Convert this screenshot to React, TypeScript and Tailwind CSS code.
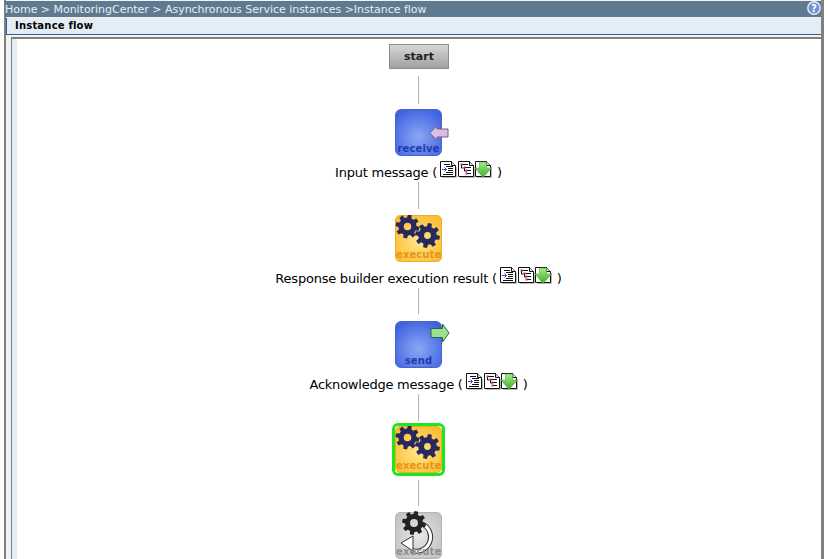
import { Fragment } from "react";

const FONT = "font-['DejaVu_Sans','Liberation_Sans',sans-serif]";

function gearPath(cx: number, cy: number, outer: number, inner: number, hole: number, teeth = 8) {
  const pts: string[] = [];
  const step = (Math.PI * 2) / teeth;
  for (let i = 0; i < teeth; i++) {
    const a = i * step - Math.PI / 2 + 0.2;
    const seq: [number, number][] = [
      [inner, a - step * 0.32],
      [outer, a - step * 0.2],
      [outer, a + step * 0.2],
      [inner, a + step * 0.32],
    ];
    for (const [r, t] of seq) {
      pts.push(`${(cx + r * Math.cos(t)).toFixed(2)} ${(cy + r * Math.sin(t)).toFixed(2)}`);
    }
  }
  const h = `M${cx - hole} ${cy}a${hole} ${hole} 0 1 0 ${hole * 2} 0a${hole} ${hole} 0 1 0 ${-hole * 2} 0z`;
  return `M${pts.join("L")}z${h}`;
}

function Connector({ h, mt = "mt-0" }: { h: string; mt?: string }) {
  return <div className={`w-px bg-[#b4b4b4] ${h} ${mt}`} />;
}

function Gears() {
  return (
    <svg width="47" height="47" viewBox="0 0 47 47" className="absolute -left-px -top-px">
      <path d={gearPath(12.5, 11.5, 12, 9, 3.8)} fill="#26285f" fillRule="evenodd" />
      <path d={gearPath(32.5, 20.5, 12.5, 9.2, 3.4)} fill="#26285f" fillRule="evenodd" />
    </svg>
  );
}

function ReceiveNode() {
  return (
    <div className="relative w-[47px] h-[47px] rounded-[6px] border border-[#4a64c8] bg-[radial-gradient(circle_at_50%_60%,#8ba8f5,#3f63e0_85%)]">
      <svg width="20" height="16" viewBox="0 0 20 16" className="absolute left-[33px] top-[15px]">
        <path d="M.7 8 8 .8v3.2h11v8H8v3.200z" fill="#d9bfe0" stroke="#7d5a8c" strokeWidth="1" />
      </svg>
      <span className={`absolute inset-x-0 bottom-0 text-center text-[10px] tracking-[0.1px] leading-[13px] font-bold text-[#1f3bb0] ${FONT}`}>receive</span>
    </div>
  );
}

function SendNode() {
  return (
    <div className="relative w-[47px] h-[47px] rounded-[6px] border border-[#4a64c8] bg-[radial-gradient(circle_at_50%_60%,#8ba8f5,#3f63e0_85%)]">
      <svg width="20" height="20" viewBox="0 0 20 20" className="absolute left-[34px] top-[1px]">
        <path d="M1 5.500h11.500V1l6.500 9-6.500 9v-4.500H1z" fill="#9ee08f" stroke="#1f6b45" strokeWidth="1" />
      </svg>
      <span className={`absolute inset-x-0 bottom-0 text-center text-[10px] tracking-[0.1px] leading-[13px] font-bold text-[#1f3bb0] ${FONT}`}>send</span>
    </div>
  );
}

function ExecuteNode() {
  return (
    <div className="relative w-[47px] h-[47px] rounded-[5px] border border-[#e6b030] bg-[radial-gradient(circle_at_50%_55%,#ffe88c,#fcbc30_85%)]">
      <Gears />
      <span className={`absolute inset-x-0 bottom-0 text-center text-[10px] tracking-[0.1px] leading-[13px] font-bold text-[#e8921a] ${FONT}`}>execute</span>
    </div>
  );
}

function LoopNode() {
  return (
    <div className="relative w-[47px] h-[47px] rounded-[5px] border border-[#b4b4b4] bg-[radial-gradient(circle_at_50%_50%,#e8e8e8,#c4c4c4_85%)]">
      <svg width="47" height="47" viewBox="0 0 47 47" className="absolute -left-px -top-px overflow-visible">
        <path d="M27 12A14 14 0 0 1 16 38" fill="none" stroke="#333" strokeWidth="5" />
        <path d="M27 12A14 14 0 0 1 16 38" fill="none" stroke="#fff" strokeWidth="3" />
        <path d="M6 31 18 24v15z" fill="#fff" stroke="#333" strokeWidth="1" />
        <path d={gearPath(19, 11, 12, 9, 4)} fill="#222" fillRule="evenodd" />
      </svg>
      <span className={`absolute inset-x-0 bottom-0 text-center text-[10px] tracking-[0.1px] leading-[13px] font-bold text-[#8f8f8f] ${FONT}`}>execute</span>
    </div>
  );
}

function DocIcon({ kind }: { kind: "lines" | "tree" | "down" }) {
  return (
    <svg width="17" height="17" viewBox="0 0 17 17" className="shrink-0">
      <defs>
        <linearGradient id="downFill" x1="0" y1="0" x2="0" y2="1">
          <stop offset="0" stopColor="#a2ec8a" />
          <stop offset="1" stopColor="#3fae24" />
        </linearGradient>
      </defs>
      <path d="M2 16.500h14.500V6" fill="none" stroke="#bbb" strokeWidth="1" />
      <path d="M.5.5h11l4 4v11H.5z" fill="#fff" stroke="#111" strokeWidth="1" />
      <path d="M11.500.5v4h4" fill="#ddd" stroke="#111" strokeWidth="1" />
      {kind === "lines" && (
        <Fragment>
          <path d="M4 3.500h6M6 5.500h7M8 7.500h5M8 9.500h5M6 11.500h7M3 13.500h10" stroke="#111" strokeWidth="1" />
          <path d="M2 8.500h4M4.500 6.500l2 2-2 2" fill="none" stroke="#2a4bd0" strokeWidth="1" />
        </Fragment>
      )}
      {kind === "tree" && (
        <Fragment>
          <path d="M3 3.500h7M6 6.500h7M8 9.500h5M9 12.500h4M3.500 4v3h2M6.500 7v3h2" stroke="#111" strokeWidth="1" fill="none" />
          <path d="M2.500 2.500h2v2h-2zM5.500 5.500h2v2h-2zM7.500 8.500h2v2h-2zM7.500 11.500h2v2h-2z" fill="#c2307a" />
        </Fragment>
      )}
      {kind === "down" && <path d="M4.500 1h7v6h5L8 16.500 0 7h4.500z" fill="url(#downFill)" stroke="#5aa844" strokeWidth=".6" />}
    </svg>
  );
}

function Label({ text }: { text: string }) {
  return (
    <div className={`flex items-center h-[17px] mt-[8px] text-[13px] tracking-[-0.23px] leading-[17px] text-black whitespace-nowrap ${FONT}`}>
      <span>{text} (</span>
      <span className="flex ml-[3px] mr-[5px] -mt-[6px]">
        <DocIcon kind="lines" />
        <span className="w-px" />
        <DocIcon kind="tree" />
        <DocIcon kind="down" />
      </span>
      <span>)</span>
    </div>
  );
}

export default function App() {
  return (
    <div className="w-[828px] h-[559px] overflow-hidden bg-white">
      <div className="ml-[4px] mr-[4px] h-full flex flex-col border-l-2 border-r-[3px] border-[#808080] bg-[#f2f2f2]">
        {/* Breadcrumb bar */}
        <div className={`relative flex items-center h-[16px] mt-px -ml-px pt-[2px] bg-[#5f7a90] text-[11px] tracking-[-0.03px] text-[#e6edf3] whitespace-nowrap ${FONT}`}>
          <span>Home &gt; MonitoringCenter &gt; Asynchronous Service instances &gt;Instance flow</span>
          <svg width="14" height="14" viewBox="0 0 14 14" className="absolute right-0 top-0">
            <circle cx="7" cy="7" r="6.2" fill="#6d93d6" stroke="#e8eef8" strokeWidth="1.4" />
            <text x="7" y="10.5" textAnchor="middle" fontSize="10" fontWeight="700" fill="#fff" fontFamily="DejaVu Sans">?</text>
          </svg>
        </div>
        {/* Tab header */}
        <div className={`mt-px h-[17px] bg-[#e4ecf4] border-b border-[#2f5f96] border-l pl-[8px] text-[10px] tracking-[0.2px] leading-[16px] font-bold text-black ${FONT}`}>
          Instance flow
        </div>
        {/* Flow panel */}
        <div className="flex-1 min-h-0 mt-[2px] ml-[5px] flex border-l border-t-2 border-[#808080] bg-white overflow-hidden">
          <div className="w-[5px] bg-[#e4ecf4]" />
          <div className="flex-1 flex flex-col items-center pt-[5px] pr-px">
            <div className={`w-[60px] h-[26px] ml-px pt-px flex items-center justify-center border border-[#8c8c8c] bg-gradient-to-b from-[#d8d8d8] to-[#a0a0a0] text-[11px] font-bold text-[#222] ${FONT}`}>start</div>
            <Connector h="h-[30px]" mt="mt-[7px]" />
            <div className="mt-[5px]"><ReceiveNode /></div>
            <Label text="Input message" />
            <Connector h="h-[28px]" mt="mt-px" />
            <div className="mt-[6px]"><ExecuteNode /></div>
            <Label text="Response builder execution result" />
            <Connector h="h-[28px]" mt="mt-px" />
            <div className="mt-[7px]"><SendNode /></div>
            <Label text="Acknowledge message" />
            <Connector h="h-[28px]" mt="mt-px" />
            <div className="mt-[2px] rounded-[6px] border-[3px] border-[#1ee61e]"><ExecuteNode /></div>
            <Connector h="h-[28px]" mt="mt-[4px]" />
            <div className="mt-[6px]"><LoopNode /></div>
          </div>
        </div>
      </div>
    </div>
  );
}
